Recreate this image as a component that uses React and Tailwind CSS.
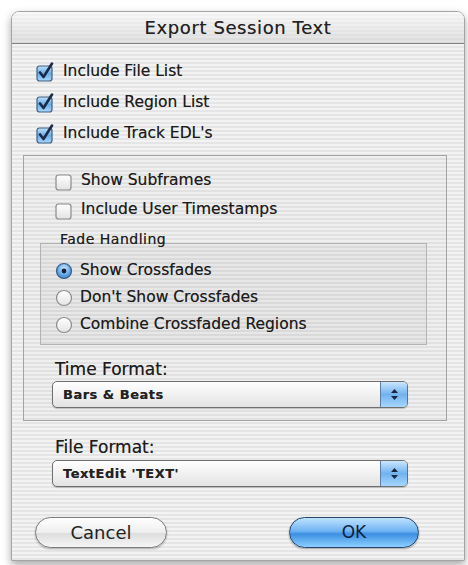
import React from 'react';

const stripes = 'bg-[repeating-linear-gradient(to_bottom,#f3f3f3_0px,#f3f3f3_2px,#e5e5e5_2px,#e5e5e5_4px)]';

const CheckBox = ({ checked }) => (
    <svg width="20" height="20" viewBox="0 0 20 20" className="shrink-0">
        <defs>
            <linearGradient id="cbBlue" x1="0" y1="0" x2="0" y2="1">
                <stop offset="0" stopColor="#bfe0fb" />
                <stop offset="0.5" stopColor="#6aaee8" />
                <stop offset="1" stopColor="#a9d6fb" />
            </linearGradient>
            <linearGradient id="cbWhite" x1="0" y1="0" x2="0" y2="1">
                <stop offset="0" stopColor="#ffffff" />
                <stop offset="1" stopColor="#e2e2e2" />
            </linearGradient>
        </defs>
        <rect x="2" y="4" width="15" height="15" rx="2.5"
            fill={checked ? 'url(#cbBlue)' : 'url(#cbWhite)'}
            stroke={checked ? '#3f5f80' : '#8a8a8a'} strokeWidth="1.2" />
        {checked && (
            <path d="M5 10.5 L8.5 15 L17 1.5" fill="none" stroke="#1b2a4a" strokeWidth="2.6" strokeLinecap="round" strokeLinejoin="round" />
        )}
    </svg>
);

const Radio = ({ checked }) => (
    <svg width="18" height="18" viewBox="0 0 18 18" className="shrink-0">
        <defs>
            <radialGradient id="rdBlue" cx="0.5" cy="0.35" r="0.7">
                <stop offset="0" stopColor="#d6ecff" />
                <stop offset="0.6" stopColor="#5fa6e6" />
                <stop offset="1" stopColor="#3a78c0" />
            </radialGradient>
            <linearGradient id="rdWhite" x1="0" y1="0" x2="0" y2="1">
                <stop offset="0" stopColor="#ffffff" />
                <stop offset="1" stopColor="#e4e4e4" />
            </linearGradient>
        </defs>
        <circle cx="9" cy="9" r="7.5" fill={checked ? 'url(#rdBlue)' : 'url(#rdWhite)'} stroke={checked ? '#3c5a7e' : '#8c8c8c'} strokeWidth="1.2" />
        {checked && <circle cx="9" cy="9" r="2.4" fill="#15223a" />}
    </svg>
);

const Popup = ({ value }) => (
    <div className="flex h-[27px] rounded-[5px] border border-[#6f6f6f] bg-[linear-gradient(to_bottom,#ffffff,#f1f1f1_50%,#e3e3e3)] shadow-[0_1px_1px_rgba(0,0,0,0.2)] overflow-hidden">
        <div className="flex-1 flex items-center pl-[10px] text-[13px] font-bold text-[#222] tracking-[0.5px]">{value}</div>
        <div className="w-[27px] flex flex-col items-center justify-center gap-[3px] border-l border-[#5d7fa6] bg-[linear-gradient(to_bottom,#cbe6fd,#71b2ee_50%,#a6d6ff)]">
            <svg width="7" height="4" viewBox="0 0 7 4"><path d="M0 4 L3.5 0 L7 4 Z" fill="#1a2640" /></svg>
            <svg width="7" height="4" viewBox="0 0 7 4"><path d="M0 0 L3.5 4 L7 0 Z" fill="#1a2640" /></svg>
        </div>
    </div>
);

const App = () => {
    return (
        <div className="w-[468px] h-[565px] bg-white pt-[11px] pl-[11px] font-['DejaVu_Sans',sans-serif] text-[#1c1c1c] [text-shadow:0_0_0.5px_rgba(0,0,0,0.5)]">
            <div className={`w-[454px] h-[550px] flex flex-col rounded-t-[8px] border border-[#a5a5a5] overflow-hidden shadow-[0_4px_8px_rgba(0,0,0,0.35)] ${stripes}`}>
                {/* Title bar */}
                <div className="h-[32px] shrink-0 flex items-center justify-center border-b border-[#808080] bg-[linear-gradient(to_bottom,rgba(255,255,255,0.6),rgba(210,210,210,0.5)),repeating-linear-gradient(to_bottom,#f0f0f0_0px,#f0f0f0_2px,#e2e2e2_2px,#e2e2e2_4px)]">
                    <span className="text-[18px] tracking-[0.6px] text-[#222]">Export Session Text</span>
                </div>

                <div className="flex flex-col pt-[12px]">
                    {/* Top checkboxes */}
                    <div className="pl-[23px] flex flex-col">
                        {['Include File List', 'Include Region List', "Include Track EDL's"].map((label) => (
                            <div key={label} className="h-[31px] flex items-center gap-[8px]">
                                <CheckBox checked />
                                <span className="text-[15.5px]">{label}</span>
                            </div>
                        ))}
                    </div>

                    {/* Group box */}
                    <div className="mt-[6px] ml-[11px] mr-[17px] border border-[#a3a3a3] bg-[rgba(0,0,0,0.015)] pt-[10px] pb-[12px] flex flex-col">
                        <div className="pl-[30px] flex flex-col">
                            {['Show Subframes', 'Include User Timestamps'].map((label) => (
                                <div key={label} className="h-[29px] flex items-center gap-[7px]">
                                    <CheckBox />
                                    <span className="text-[15.5px]">{label}</span>
                                </div>
                            ))}
                        </div>

                        <div className="mt-[8px] ml-[36px] text-[14px] leading-[14px] tracking-[0.5px] relative z-10">Fade Handling</div>
                        <div className="-mt-[3px] ml-[16px] mr-[19px] border border-[#b3b3b3] bg-[rgba(0,0,0,0.03)] pt-[13px] pb-[6px] pl-[14px] flex flex-col">
                            {[
                                ['Show Crossfades', true],
                                ["Don't Show Crossfades", false],
                                ['Combine Crossfaded Regions', false],
                            ].map(([label, on]) => (
                                <div key={label} className="h-[27px] flex items-center gap-[7px]">
                                    <Radio checked={on} />
                                    <span className="text-[15.5px]">{label}</span>
                                </div>
                            ))}
                        </div>

                        <div className="mt-[15px] pl-[31px] text-[17px] leading-[18px]">Time Format:</div>
                        <div className="mt-[3px] ml-[28px] mr-[38px]">
                            <Popup value="Bars & Beats" />
                        </div>
                    </div>

                    <div className="mt-[17px] pl-[43px] text-[17px] leading-[18px]">File Format:</div>
                    <div className="mt-[4px] ml-[40px] mr-[56px]">
                        <Popup value="TextEdit 'TEXT'" />
                    </div>

                    {/* Buttons */}
                    <div className="mt-[30px] pl-[23px] pr-[45px] flex items-center justify-between">
                        <button className="w-[132px] h-[31px] rounded-full border border-[#7c7c7c] bg-[linear-gradient(to_bottom,#ffffff,#eeeeee_50%,#dcdcdc_51%,#f6f6f6)] shadow-[0_1px_2px_rgba(0,0,0,0.3)] text-[18px] text-[#222]">
                            Cancel
                        </button>
                        <button className="w-[130px] h-[31px] rounded-full border border-[#27466f] bg-[linear-gradient(to_bottom,#bfe2ff,#6fb4f2_45%,#3c8fe2_55%,#8cd0ff)] shadow-[0_1px_2px_rgba(0,0,0,0.35)] text-[17px] text-[#10213d]">
                            OK
                        </button>
                    </div>
                </div>
            </div>
        </div>
    );
};

export default App;
